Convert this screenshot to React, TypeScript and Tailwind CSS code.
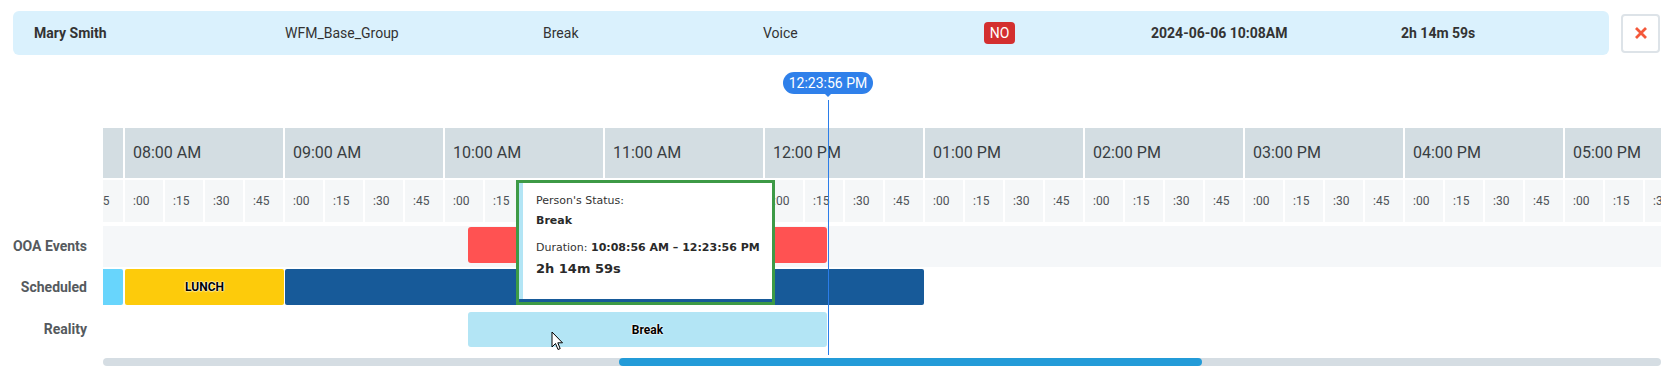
import React from "react";

const hours = [
  "07:00 AM",
  "08:00 AM",
  "09:00 AM",
  "10:00 AM",
  "11:00 AM",
  "12:00 PM",
  "01:00 PM",
  "02:00 PM",
  "03:00 PM",
  "04:00 PM",
  "05:00 PM",
  "06:00 PM",
];
const mins = [":00", ":15", ":30", ":45"];

export default function App() {
  return (
    <div className="relative w-[1668px] h-[377px] bg-white overflow-hidden font-['Roboto',sans-serif] text-[#333]">
      {/* top info bar */}
      <div className="flex items-center pt-[11px] pl-[13px]">
        <div className="flex items-center w-[1596px] h-[44px] rounded-[6px] bg-[#daf1fd] pl-[21px] text-[14px] text-[#333]">
          <div className="w-[251px] font-bold">Mary Smith</div>
          <div className="w-[258px]">WFM_Base_Group</div>
          <div className="w-[220px]">Break</div>
          <div className="w-[221px]">Voice</div>
          <div className="w-[167px] flex">
            <span className="flex items-center justify-center w-[31px] h-[22px] rounded-[4px] bg-[#d32f2f] text-white text-[14px]">
              NO
            </span>
          </div>
          <div className="w-[250px] font-bold">2024-06-06 10:08AM</div>
          <div className="font-bold">2h 14m 59s</div>
        </div>
        <button className="ml-[12px] w-[39px] h-[39px] rounded-[4px] border-2 border-[#dde3e8] bg-white flex items-center justify-center">
          <svg width="14" height="14" viewBox="0 0 14 14">
            <path d="M2 2 L12 12 M12 2 L2 12" stroke="#f4583a" strokeWidth="2.8" strokeLinecap="butt" />
          </svg>
        </button>
      </div>

      {/* timeline */}
      <div className="mt-[73px]">
        {/* hour header */}
        <div className="flex">
          <div className="w-[103px] shrink-0" />
          <div className="w-[1558px] overflow-hidden">
            <div className="flex -ml-[140px]">
              {hours.map((h) => (
                <div
                  key={h}
                  className="shrink-0 w-[158px] ml-[2px] h-[50px] bg-[#d3dde2] flex items-center pl-[8px] text-[16px] text-[#383d41] whitespace-nowrap"
                >
                  {h}
                </div>
              ))}
            </div>
          </div>
        </div>

        {/* minute row */}
        <div className="flex mt-[2px]">
          <div className="w-[103px] shrink-0" />
          <div className="w-[1558px] overflow-hidden">
            <div className="flex -ml-[140px]">
              {hours.map((h) =>
                mins.map((m) => (
                  <div
                    key={h + m}
                    className="shrink-0 w-[38px] ml-[2px] h-[42px] bg-[#f5f7f8] flex items-center pl-[8px] text-[12px] text-[#4d5257]"
                  >
                    {m}
                  </div>
                ))
              )}
            </div>
          </div>
        </div>

        {/* OOA events */}
        <div className="flex mt-[4px]">
          <div className="w-[103px] shrink-0 flex items-center justify-end pr-[16px] text-[14px] font-bold text-[#555a5e]">
            OOA Events
          </div>
          <div className="w-[1558px] h-[41px] bg-[#f5f7f9] pt-[1px] pl-[365px]">
            <div className="w-[359px] h-[36px] rounded-[3px] bg-[#ff5252]" />
          </div>
        </div>

        {/* Scheduled */}
        <div className="flex mt-[2px]">
          <div className="w-[103px] shrink-0 flex items-center justify-end pr-[16px] text-[14px] font-bold text-[#555a5e]">
            Scheduled
          </div>
          <div className="w-[1558px] h-[36px] flex">
            <div className="w-[20px] h-full bg-[#68d5fc] rounded-r-[2px]" />
            <div className="ml-[2px] w-[159px] h-full bg-[#fdcb0b] rounded-[2px] flex items-center justify-center text-[12px] font-bold text-black [text-shadow:0_0_2px_#fff,0_0_2px_#fff,0_0_1px_#fff]">
              LUNCH
            </div>
            <div className="ml-[1px] w-[639px] h-full bg-[#175a99] rounded-[2px]" />
          </div>
        </div>

        {/* Reality */}
        <div className="flex mt-[7px]">
          <div className="w-[103px] shrink-0 flex items-center justify-end pr-[16px] text-[14px] font-bold text-[#555a5e]">
            Reality
          </div>
          <div className="w-[1558px] h-[35px] pl-[365px]">
            <div className="w-[359px] h-full rounded-[3px] bg-[#b3e5f5] flex items-center justify-center text-[12px] font-bold text-black [text-shadow:0_0_2px_#fff,0_0_2px_#fff,0_0_1px_#fff]">
              Break
            </div>
          </div>
        </div>

        {/* scrollbar */}
        <div className="mt-[11px] ml-[103px] w-[1558px] h-[8px] rounded-full bg-[#d5dde3]">
          <div className="ml-[516px] w-[583px] h-full rounded-full bg-[#239bd8]" />
        </div>
      </div>

      {/* now marker */}
      <div className="absolute left-[828px] top-[100px] w-px h-[255px] bg-[#2b7de9]" />
      <div className="absolute left-[783px] top-[72px] w-[90px] h-[22px] rounded-full bg-[#2f80ea] text-white text-[14px] flex items-center justify-center">
        12:23:56 PM
        <div className="absolute left-[41px] top-[21px] w-0 h-0 border-l-[4px] border-r-[4px] border-t-[4px] border-l-transparent border-r-transparent border-t-[#2f80ea]" />
      </div>

      {/* tooltip */}
      <div className="absolute left-[516px] top-[180px] w-[259px] h-[125px] border-[3px] border-[#3d9a46] bg-white flex flex-col">
        <div className="flex flex-1">
          <div className="w-[4px] bg-[#b3e5f5]" />
          <div className="flex-1 bg-white pl-[13px] pt-[11px] font-['DejaVu_Sans',sans-serif] text-[11px] leading-[13px] text-[#333]">
            <div>Person's Status:</div>
            <div className="mt-[7px] font-bold text-[#2a2a2a]">Break</div>
            <div className="mt-[14px] whitespace-nowrap">
              Duration: <span className="font-bold text-[#2a2a2a]">10:08:56 AM – 12:23:56 PM</span>
            </div>
            <div className="mt-[7px] text-[13px] leading-[16px] font-bold text-[#2a2a2a]">2h 14m 59s</div>
          </div>
        </div>
        <div className="h-[3px] bg-[#175a99]" />
      </div>

      {/* mouse cursor */}
      <svg className="absolute left-[551px] top-[331px]" width="13" height="20" viewBox="0 0 13 20">
        <path
          d="M1 1 L1 16 L4.5 12.5 L7 18.5 L9.2 17.6 L6.8 11.8 L11.5 11.8 Z"
          fill="#fff"
          stroke="#000"
          strokeWidth="1"
          strokeLinejoin="round"
        />
      </svg>
    </div>
  );
}
